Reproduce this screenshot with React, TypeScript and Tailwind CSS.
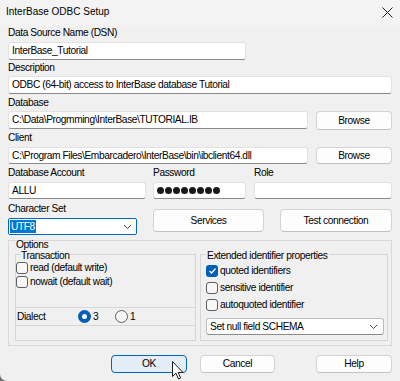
import React from "react";

const ui = "font-['Liberation_Sans',Arial,sans-serif]";

function Field({ className = "", children }: { className?: string; children?: React.ReactNode }) {
  return (
    <div className={`bg-white border border-[#e2e2e2] border-b-[#8a8a8a] rounded-[3px] flex items-center px-[3px] whitespace-nowrap overflow-hidden ${className}`}>
      {children}
    </div>
  );
}

function Btn({ className = "", children }: { className?: string; children: React.ReactNode }) {
  return (
    <div className={`flex items-center justify-center bg-[#fdfdfd] border border-[#d3d3d3] border-b-[#c2c2c2] rounded-[4px] ${className}`}>
      {children}
    </div>
  );
}

function Chevron() {
  return (
    <svg width="9" height="6" viewBox="0 0 9 6" className="shrink-0">
      <polyline points="1,1 4.5,4.5 8,1" fill="none" stroke="#444" strokeWidth="1" />
    </svg>
  );
}

function Check({ checked = false, label }: { checked?: boolean; label: string }) {
  return (
    <div className="flex items-center gap-[2px]">
      {checked ? (
        <div className="w-[12px] h-[12px] rounded-[3px] bg-[#005fb8] flex items-center justify-center">
          <svg width="9" height="8" viewBox="0 0 9 8">
            <polyline points="1.5,4 3.6,6 7.5,1.5" fill="none" stroke="white" strokeWidth="1.3" />
          </svg>
        </div>
      ) : (
        <div className="w-[12px] h-[12px] rounded-[3px] border border-[#5d5d5d] bg-[#f7f7f7]" />
      )}
      <span>{label}</span>
    </div>
  );
}

export default function App() {
  return (
    <div className="w-[400px] h-[381px] bg-[#6f6f6f] overflow-hidden">
      <div className={`relative h-full bg-[#f0f0f0] rounded-bl-[7px] text-black text-[10.2px] tracking-[-0.4px] leading-[12px] ${ui}`}>
        {/* Title bar */}
        <div className="h-[27px] flex items-center justify-between pl-[6px] pr-[7px] bg-[#f3f3f3]">
          <span className="text-[10px] tracking-normal pb-[3px]">InterBase ODBC Setup</span>
          <svg width="11" height="11" viewBox="0 0 11 11" className="mb-[3px]">
            <path d="M0.5 0.5 L10.5 10.5 M10.5 0.5 L0.5 10.5" stroke="#222" strokeWidth="1" />
          </svg>
        </div>

        <div className="px-[8px] flex flex-col">
          <div className="h-[12px]">Data Source Name (DSN)</div>
          <Field className="mt-[3px] h-[18px] w-[238px]">InterBase_Tutorial</Field>

          <div className="mt-[2px] h-[12px]">Description</div>
          <Field className="mt-[2px] h-[18px]">ODBC (64-bit) access to InterBase database Tutorial</Field>

          <div className="mt-[3px] h-[12px]">Database</div>
          <div className="mt-[2px] flex gap-[8px]">
            <Field className="flex-1 h-[18px]">C:\Data\Progmming\InterBase\TUTORIAL.IB</Field>
            <Btn className="w-[76px] h-[19px]">Browse</Btn>
          </div>

          <div className="mt-[2px] h-[12px]">Client</div>
          <div className="mt-[3px] flex gap-[8px]">
            <Field className="flex-1 h-[17px]">C:\Program Files\Embarcadero\InterBase\bin\ibclient64.dll</Field>
            <Btn className="w-[76px] h-[17px]">Browse</Btn>
          </div>

          <div className="mt-[3px] flex">
            <div className="w-[138px] flex flex-col">
              <div className="h-[12px]">Database Account</div>
              <Field className="mt-[3px] h-[17px]">ALLU</Field>
            </div>
            <div className="w-[93px] ml-[7px] flex flex-col">
              <div className="h-[12px]">Password</div>
              <Field className="mt-[3px] h-[17px] gap-[1px]">
                {Array.from({ length: 8 }).map((_, i) => (
                  <div key={i} className="w-[7px] h-[7px] rounded-full bg-[#1a1a1a]" />
                ))}
              </Field>
            </div>
            <div className="flex-1 ml-[8px] flex flex-col">
              <div className="h-[12px]">Role</div>
              <Field className="mt-[3px] h-[17px]" />
            </div>
          </div>

          <div className="mt-[4px] flex">
            <div className="w-[129px] flex flex-col">
              <div className="h-[12px]">Character Set</div>
              <div className="mt-[3px] h-[17px] bg-white border border-[#0067c0] rounded-[2px] flex items-center justify-between pl-[1px] pr-[4px]">
                <span className="bg-[#0078d7] text-white px-[1px] leading-[13px]">UTF8</span>
                <Chevron />
              </div>
            </div>
            <Btn className="ml-[16px] mt-[6px] w-[111px] h-[23px]">Services</Btn>
            <Btn className="ml-[16px] mt-[6px] flex-1 h-[23px]">Test connection</Btn>
          </div>

          {/* Options */}
          <div className="mt-[5px] h-[106px] border border-[#d9d9d9] flex flex-col">
            <div className="h-[6px] leading-[6px] pl-[7px] pt-[1px]">Options</div>
            <div className="mt-[7px] flex">
              {/* Transaction */}
              <div className="relative ml-[6px] w-[181px] h-[87px] border border-[#d6d6d6] flex flex-col">
                <span className="absolute -top-[5px] left-[4px] px-[1px] leading-[12px] bg-[#f0f0f0]">Transaction</span>
                <div className="mt-[6px] h-[14px] flex items-center">
                  <Check label="read (default write)" />
                </div>
                <div className="h-[14px] flex items-center">
                  <Check label="nowait (default wait)" />
                </div>
                <div className="flex-1" />
                <div className="h-[19px] border-y border-[#d6d6d6] flex items-center pl-[1px]">
                  <span className="w-[61px]">Dialect</span>
                  <div className="w-[13px] h-[13px] rounded-full bg-[#005fb8] flex items-center justify-center">
                    <div className="w-[5px] h-[5px] rounded-full bg-white" />
                  </div>
                  <span className="ml-[2px] w-[22px]">3</span>
                  <div className="w-[13px] h-[13px] rounded-full border border-[#5d5d5d] bg-[#f7f7f7]" />
                  <span className="ml-[2px]">1</span>
                </div>
                <div className="h-[14px]" />
              </div>

              {/* Extended identifier properties */}
              <div className="relative ml-[4px] w-[188px] h-[87px] border border-[#d6d6d6] flex flex-col pl-[5px]">
                <span className="absolute -top-[5px] left-[5px] px-[1px] leading-[12px] bg-[#f0f0f0]">Extended identifier properties</span>
                <div className="mt-[7px] h-[17px] flex items-center">
                  <Check checked label="quoted identifiers" />
                </div>
                <div className="h-[17px] flex items-center">
                  <Check label="sensitive identifier" />
                </div>
                <div className="h-[17px] flex items-center">
                  <Check label="autoquoted identifier" />
                </div>
                <div className="mt-[5px] w-[178px] h-[17px] bg-white border border-[#bdbdbd] border-b-[#8a8a8a] rounded-[3px] flex items-center justify-between pl-[3px] pr-[5px]">
                  <span>Set null field SCHEMA</span>
                  <Chevron />
                </div>
              </div>
            </div>
          </div>

          {/* Dialog buttons */}
          <div className="mt-[9px] flex">
            <div className="ml-[103px] w-[76px] h-[18px] flex items-center justify-center bg-[#e3edf8] border border-[#0067c0] rounded-[4px]">OK</div>
            <Btn className="ml-[13px] w-[75px] h-[18px]">Cancel</Btn>
            <Btn className="ml-[41px] w-[76px] h-[18px]">Help</Btn>
          </div>
        </div>

        {/* Mouse cursor */}
        <svg width="12" height="19" viewBox="0 0 12 19" className="absolute left-[172px] top-[361px]">
          <path d="M0.5 0.5 L0.5 15.5 L4 12.2 L6.5 18 L8.6 17.1 L6.2 11.5 L11 11.5 Z" fill="white" stroke="#1a1a1a" strokeWidth="1" strokeLinejoin="round" />
        </svg>
      </div>
    </div>
  );
}
